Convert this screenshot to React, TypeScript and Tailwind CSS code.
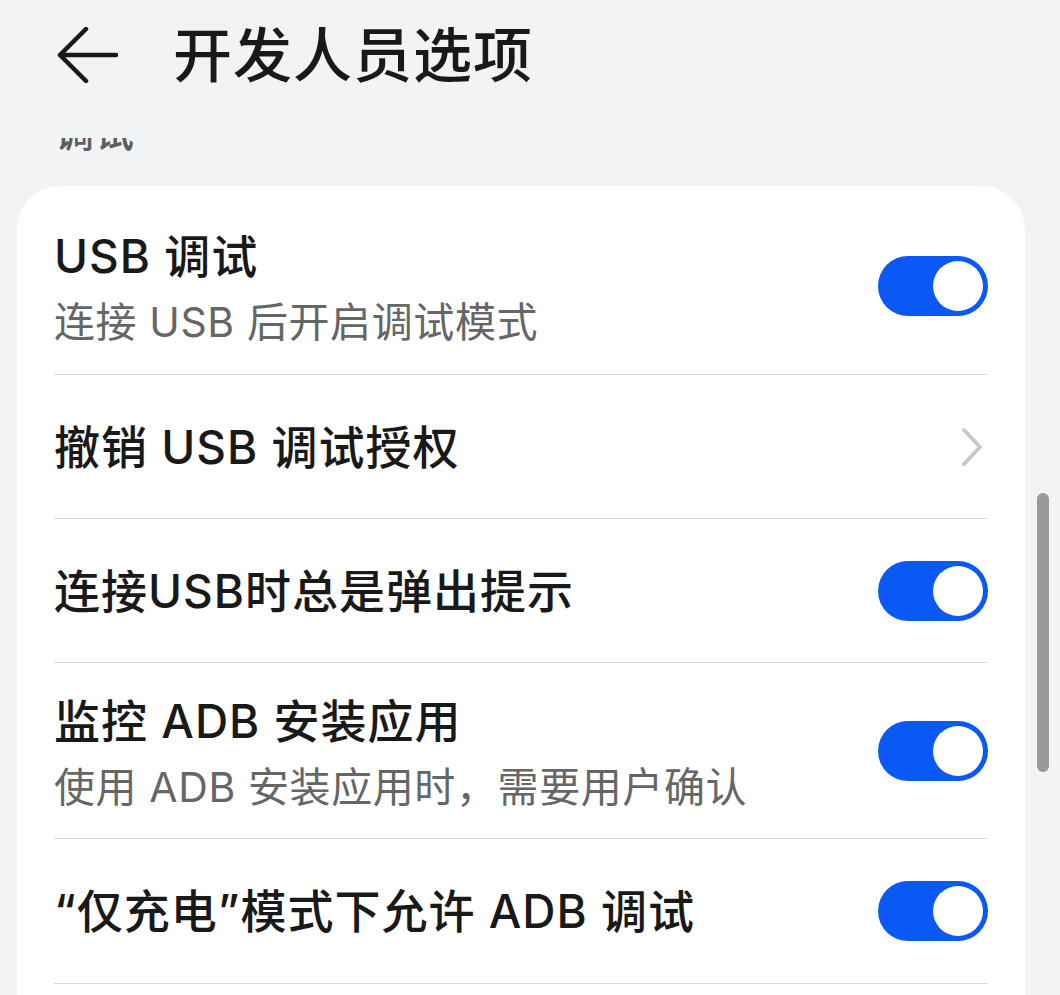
import React from 'react';

const FONT = "font-['Inter','Noto_Sans_CJK_SC',sans-serif]";

type Row =
  | { kind: 'toggle'; title: string; desc?: string }
  | { kind: 'link'; title: string };

const rows: Row[] = [
  { kind: 'toggle', title: 'USB 调试', desc: '连接 USB 后开启调试模式' },
  { kind: 'link', title: '撤销 USB 调试授权' },
  { kind: 'toggle', title: '连接USB时总是弹出提示' },
  { kind: 'toggle', title: '监控 ADB 安装应用', desc: '使用 ADB 安装应用时，需要用户确认' },
  { kind: 'toggle', title: '“仅充电”模式下允许 ADB 调试' },
];

function Toggle() {
  return (
    <div className="w-[110px] h-[60px] rounded-full bg-[#0a59f7] flex items-center justify-end pr-[5px] shrink-0">
      <div className="w-[50px] h-[50px] rounded-full bg-white" />
    </div>
  );
}

function Chevron() {
  return (
    <svg width="24" height="40" viewBox="0 0 24 40" fill="none" className="mr-[4px] shrink-0">
      <path d="M4 3 L20 20 L4 37" stroke="#c8c8c8" strokeWidth="4" strokeLinecap="round" strokeLinejoin="round" />
    </svg>
  );
}

function SettingRow({ row, height }: { row: Row; height: string }) {
  const desc = row.kind === 'toggle' ? row.desc : undefined;
  return (
    <div className={`flex items-center justify-between border-b border-[#dadada] ${height}`}>
      <div className="flex flex-col">
        <span className="text-[46px] leading-[60px] font-medium text-[#191919] tracking-[1px]">
          {row.title}
        </span>
        {desc && (
          <span className="mt-3 text-[41px] leading-[48px] text-[#666666] tracking-[0.6px]">
            {desc}
          </span>
        )}
      </div>
      {row.kind === 'toggle' ? <Toggle /> : <Chevron />}
    </div>
  );
}

export default function App() {
  const heights = ['h-[177px]', 'h-[144px]', 'h-[144px]', 'h-[176px]', 'h-[145px]'];

  return (
    <div className={`relative h-screen w-full overflow-hidden bg-[#f1f3f5] ${FONT}`}>
      {/* Header */}
      <header className="relative z-10 h-[138px] bg-[#f1f3f5]">
        <div className="h-[110px] flex items-center pl-[57px]">
          <svg width="61" height="56" viewBox="0 0 61 56" fill="none" className="shrink-0">
            <path d="M3 28 H59 M29 2 L3 28 L29 54" stroke="#191919" strokeWidth="4.5" strokeLinecap="round" strokeLinejoin="round" />
          </svg>
          <h1 className="ml-[55px] text-[59px] leading-none font-medium text-[#191919] tracking-[1px]">开发人员选项</h1>
        </div>
      </header>

      {/* Content */}
      <main className="-mt-[24px]">
        <div className="pl-[55px] text-[39px] leading-[38px] font-medium text-[#5f5f5f] tracking-[1px]">调试</div>
        <div className="mt-[34px] ml-[17px] w-[1008px] rounded-[44px] bg-white pt-[12px] px-[37px] pb-[60px]">
          {rows.map((row, i) => (
            <SettingRow key={i} row={row} height={heights[i]} />
          ))}
        </div>
      </main>

      {/* Scrollbar */}
      <div className="absolute left-[1037px] top-[493px] w-[12px] h-[279px] rounded-full bg-[#9a9a9a]" />
    </div>
  );
}
